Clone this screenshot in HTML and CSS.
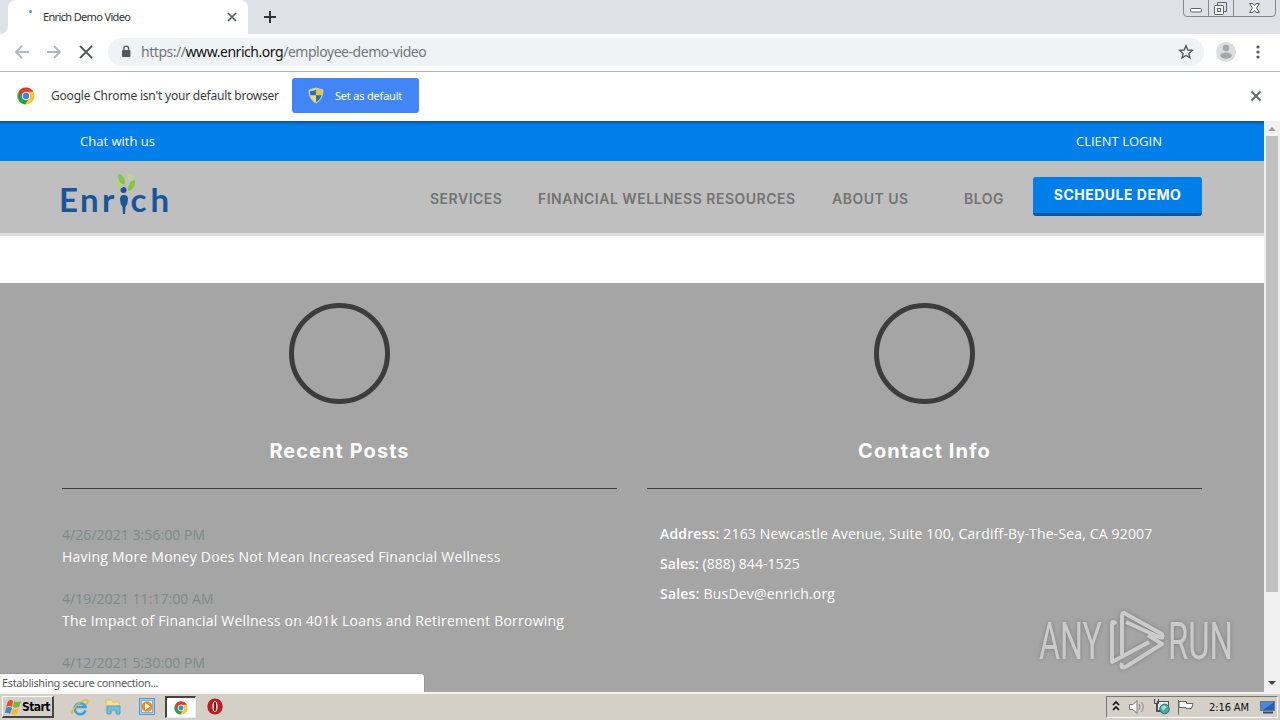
FILE: index.html
```html
<!DOCTYPE html>
<html lang="en">
<head>
<meta charset="utf-8">
<title>Enrich Demo Video</title>
<link rel="stylesheet" href="styles.css">
</head>
<body>
<svg class="defs" width="0" height="0">
  <symbol id="chrome" viewBox="0 0 18 18">
    <circle cx="9" cy="9" r="8.5" fill="#fbc72e"/>
    <path d="M1.600 4.800A8.500 8.500 0 0 0 8.200 17.500L12 11 9 9Z" fill="#2aa04e"/>
    <path d="M1.600 4.800A8.500 8.500 0 0 1 16.400 4.800H9L5.400 10.800Z" fill="#df3c30"/>
    <circle cx="9" cy="9" r="4.100" fill="#fff"/><circle cx="9" cy="9" r="3.200" fill="#4285e8"/>
  </symbol>
</svg>
<div class="screen">
  <header class="tabstrip">
    <div class="edge"></div>
    <div class="tab">
      <i class="spinner"></i><span class="tab-title">Enrich Demo Video</span>
      <svg class="tab-close" width="10" height="10" viewBox="0 0 10 10"><path d="M1 1 9 9M9 1 1 9" stroke="#55595d" stroke-width="1.6"/></svg>
    </div>
    <svg class="new-tab" width="12" height="12" viewBox="0 0 12 12"><path d="M6 0V12M0 6H12" stroke="#303338" stroke-width="2"/></svg>
    <svg class="window-buttons" width="94" height="18" viewBox="0 0 94 18" fill="none" stroke="#5c616a">
      <path d="M.5 0V13Q.5 16.5 4 16.5H89Q92.5 16.5 92.5 13V0M25.500 0V16M50.500 0V16" stroke="#858991"/>
      <rect x="7.500" y="8.500" width="11" height="3.500" rx="1" fill="#fff"/>
      <path d="M34.500 5V2.500H43.500V11.500H41"/><rect x="31.500" y="5.500" width="9" height="9" rx="1" fill="#f5f6f8"/><rect x="34.500" y="8.500" width="3" height="3"/>
      <path d="M66.500 3.500H70L71.500 5.500 73 3.500H76.500L73.500 8 76.500 12.500H73L71.500 10.500 70 12.500H66.500L69.500 8Z" fill="#fff"/>
    </svg>
  </header>

  <div class="toolbar">
    <svg class="nav-icons" width="80" height="16" viewBox="0 0 80 16" fill="none" stroke-width="1.800">
      <path d="M15 8H2M8 2 2 8 8 14M33 8H46M40 2 46 8 40 14" stroke="#b4b6b8"/><path d="M66 2 78 14M78 2 66 14" stroke="#55585c"/>
    </svg>
    <div class="omnibox">
      <svg width="10" height="13" viewBox="0 0 10 13"><rect x="1" y="5" width="8.500" height="7" rx="1" fill="#55595e"/><path d="M2.800 5V3.500a2.400 2.400 0 0 1 4.800 0V5" fill="none" stroke="#55595e" stroke-width="1.400"/></svg>
      <div class="url"><span>https://</span><b>www.enrich.org</b><span>/employee-demo-video</span></div>
      <svg class="star" width="16" height="16" viewBox="0 0 16 16"><path d="M8 1.800 9.800 6 14.300 6.400 10.900 9.400 11.900 13.800 8 11.500 4.100 13.800 5.100 9.400 1.700 6.400 6.200 6Z" fill="none" stroke="#55595e" stroke-width="1.400"/></svg>
    </div>
    <svg class="avatar" width="20" height="20" viewBox="0 0 20 20"><circle cx="10" cy="10" r="10" fill="#dcdddd"/><circle cx="10" cy="6" r="3.200" fill="#a6a7a8"/><ellipse cx="10" cy="13.600" rx="5.800" ry="3.100" fill="#a6a7a8"/></svg>
    <svg width="4" height="14" viewBox="0 0 4 14" fill="#55585c"><circle cx="2" cy="2" r="1.600"/><circle cx="2" cy="7" r="1.600"/><circle cx="2" cy="12" r="1.600"/></svg>
  </div>

  <div class="infobar">
    <svg width="18" height="18"><use href="#chrome"/></svg>
    <span class="info-text">Google Chrome isn't your default browser</span>
    <div class="default-button">
      <svg width="14" height="15" viewBox="0 0 14 15"><path d="M7 0 14 2C14 8 12 12 7 15Z" fill="#e8c83a"/><path d="M7 0 0 2C0 8 2 12 7 15Z" fill="#f2dd62"/><path d="M7 1.500V7.200H1.300L1 3Q5 3 7 1.500Z" fill="#2c6ec4"/><path d="M7 7.200H12.500Q11.500 11.500 7 14Z" fill="#286abb"/><path d="M7 0 14 2C14 8 12 12 7 15 2 12 0 8 0 2Z" fill="none" stroke="#c3cad0"/></svg>
      <span>Set as default</span>
    </div>
    <svg class="info-close" width="10" height="10" viewBox="0 0 10 10"><path d="M.5.5 9.500 9.500M9.500.5.5 9.500" stroke="#66696c" stroke-width="2"/></svg>
  </div>

  <div class="viewport">
    <main class="page">
      <div class="topbar"><span class="chat">Chat with us</span><span class="login">CLIENT LOGIN</span></div>
      <nav class="site-nav">
        <svg class="logo" width="116" height="56" viewBox="-4 0 116 56">
          <g class="logo-text"><text x="-3 18 40" y="40">Enr</text><text x="68.500 88.500" y="40">ch</text></g>
          <circle cx="61.500" cy="18" r="3" fill="#2449a0"/><path d="M58 27Q58 23 62 23T66 27Q66 32 63.500 35L63 42H61L60.500 35Q58 32 58 27Z" fill="#17569b"/>
          <path d="M56 2Q63 1 63 13 56 12 56 2Z" fill="#86c83d"/><path d="M73 8Q66 9 66 19 74 17 73 8Z" fill="#83c536"/><path d="M65 2Q72 1 71 6L66 11Z" fill="#bdce9c"/><path d="M54 8Q52 15 58 17L61 15Z" fill="#b5cf8b"/>
        </svg>
        <span>SERVICES</span><span class="resources">FINANCIAL WELLNESS RESOURCES</span><span>ABOUT US</span><span>BLOG</span>
        <span class="demo">SCHEDULE DEMO</span>
      </nav>
      <div class="spacer"></div>
      <div class="columns">
        <section>
          <div class="ring"></div><h2>Recent Posts</h2>
          <div class="posts">
            <article><time>4/26/2021 3:56:00 PM</time><p>Having More Money Does Not Mean Increased Financial Wellness</p></article>
            <article><time>4/19/2021 11:17:00 AM</time><p>The Impact of Financial Wellness on 401k Loans and Retirement Borrowing</p></article>
            <article><time>4/12/2021 5:30:00 PM</time></article>
          </div>
        </section>
        <section>
          <div class="ring"></div><h2>Contact Info</h2>
          <div class="details">
            <p class="address"><b>Address:</b> 2163 Newcastle Avenue, Suite 100, Cardiff-By-The-Sea, CA 92007</p>
            <p class="phone"><b>Sales:</b> (888) 844-1525</p><p class="email"><b>Sales:</b> BusDev@enrich.org</p>
          </div>
        </section>
      </div>
    </main>
    <div class="scrollbar">
      <svg width="16" height="15"><path d="M4 10 8 6 12 10Z" fill="#999"/></svg>
      <div class="thumb"></div>
      <svg width="16" height="17"><path d="M4 6H12L8 10Z" fill="#444"/></svg>
    </div>
    <div class="status">Establishing secure connection...</div>
    <svg class="watermark" width="208" height="70" viewBox="0 0 208 70">
      <text x="3" y="51" textLength="63" lengthAdjust="spacingAndGlyphs">ANY</text><text x="132" y="51" textLength="65" lengthAdjust="spacingAndGlyphs">RUN</text>
      <g fill="none" stroke="#d2d2d2" stroke-width="4" stroke-linejoin="round">
        <path d="M80 16Q76 11 76 17V54L113 34"/><path d="M86 47V8Q86 3 90 6L126 26Q128 31 123 29L90 14"/><path d="M112 27 126 36 91 58Q84 62 86 55"/>
      </g>
    </svg>
  </div>

  <footer class="taskbar">
    <div class="start">
      <svg width="17" height="16" viewBox="0 0 17 16"><path d="M3 2Q6 0 8 2L7 8Q4 6 1 8Z" fill="#df5426"/><path d="M9 2Q12 4 16 2L14 8Q11 9 8 8Z" fill="#73b442"/><path d="M1 9Q4 7 7 9L5 15Q3 13 0 14Z" fill="#3f84ca"/><path d="M8 9Q11 11 14 9L12 15Q9 16 6 15Z" fill="#f3bb2d"/></svg><span>Start</span>
    </div>
    <svg class="ie" width="18" height="18" viewBox="0 0 18 18"><path d="M14.500 12.500A5.500 5.500 0 1 1 14.500 9H5" fill="none" stroke="#3ba2df" stroke-width="2.600"/><path d="M2 16Q-1 15 5 8 12 1 16 2 18 3 15 7" fill="none" stroke="#e4b928" stroke-width="1.500"/></svg>
    <svg class="folder" width="18" height="18" viewBox="0 0 18 18"><path d="M2 4V2H7L9 4H15V13H2Z" fill="#f4e28e" stroke="#d9c168"/><path d="M3 8H16V16H12V12H7V16H3Z" fill="#75bde3" stroke="#4a9dcc"/></svg>
    <svg class="player" width="16" height="17" viewBox="0 0 16 17"><rect x=".5" y=".5" width="15" height="16" fill="#a5cfef" stroke="#5795ca"/><rect x="2.500" y="2.500" width="11" height="12" fill="#e9f3fb" stroke="#7bafd8"/><circle cx="8" cy="8.500" r="5.300" fill="#f18a18"/><path d="M6 5 11.500 8.500 6 12Z" fill="#fff"/></svg>
    <div class="active-app"><svg width="14" height="14"><use href="#chrome"/></svg></div>
    <svg class="opera" width="16" height="17" viewBox="0 0 16 17"><ellipse cx="8" cy="8.500" rx="7.700" ry="8" fill="#bd1c20"/><ellipse cx="8" cy="8.500" rx="2.600" ry="5.500" fill="#fff"/><ellipse cx="8" cy="8.500" rx="1.200" ry="5" fill="#8e1013"/></svg>
    <div class="tray">
      <svg class="tray-icons" width="96" height="20" viewBox="0 0 96 20" fill="none">
        <path d="M6 8 9 5 12 8M6 13 9 10 12 13" stroke="#111" stroke-width="1.700"/>
        <path d="M22.500 7.500H26L30 3.500V16.500L26 12.500H22.500Z" fill="#fff" stroke="#777"/><path d="M32 7Q34 10 32 13M34.500 5Q38 10 34.500 15" stroke="#888"/>
        <rect x="50.500" y="4.500" width="11" height="9" fill="#dce9ee" stroke="#555"/><path d="M47.500 2V6.500H51.500V2M49.500 7V14.500H56" stroke="#444"/><circle cx="57.500" cy="12" r="4.800" fill="#41a99e" stroke="#376e87"/><path d="M54 10Q57 7 60 10L56 14Z" fill="#a1dfc6"/>
        <path d="M71.500 3V17.500M72 4.500H79.500V6.500H86L84.500 11.500H79V10.500H72Z" fill="#fff" stroke="#666"/>
      </svg>
      <span class="clock">2:16 AM</span>
      <svg class="display" width="16" height="14" viewBox="0 0 16 14"><rect x=".5" y="1.500" width="14" height="9" fill="#235eb7" stroke="#64758a"/><path d="M1 2H14L3 10H1Z" fill="#4a89da"/><path d="M3 12.500H13" stroke="#2d4b79" stroke-width="2"/></svg>
    </div>
  </footer>
</div>
</body>
</html>
```
FILE: styles.css
```css
* { box-sizing: border-box; }
body, p, h2 { margin: 0; }
body { overflow: hidden; font-family: "DejaVu Sans Condensed", "DejaVu Sans", sans-serif; }
svg { display: block; flex: none; overflow: visible; }
.defs { position: absolute; }
span, p, time, h2, .url, .status { white-space: nowrap; }
.screen { width: 1280px; height: 720px; display: flex; flex-direction: column; }

.tabstrip { height: 34px; flex: none; display: flex; background: #dee1e7; }
.edge { width: 8px; background: #fff; }
.edge::before { content: ""; display: block; height: 34px; background: #dee1e7; border-bottom-right-radius: 8px; }
.tab { width: 240px; height: 34px; padding-bottom: 1px; display: flex; align-items: center; background: #fff; border-radius: 8px 8px 0 0; }
.spinner { width: 3px; height: 3px; margin: -10px 11px 0 21px; background: #5c93c2; border-radius: 50%; }
.tab-title { width: 184px; font-family: "Noto Sans", sans-serif; font-size: 11px; letter-spacing: -.65px; color: #303236; }
.new-tab { margin: 11px 0 0 16px; }
.window-buttons { margin-left: auto; margin-right: 3px; }

.toolbar { height: 38px; flex: none; display: flex; align-items: center; padding-bottom: 2px; border-bottom: 1px solid #b1b3b5; background: #fff; }
.nav-icons { margin-left: 14px; }
.omnibox { width: 1096px; height: 28px; margin-left: 14px; padding-left: 13px; display: flex; align-items: center; border-radius: 14px; background: #f0f3f5; }
.url { margin-left: 10px; font-family: "Noto Sans", sans-serif; font-size: 14px; letter-spacing: -.46px; color: #73777b; }
.url b { font-weight: 400; color: #111; }
.star { margin-left: auto; margin-right: 10px; }
.avatar { margin: 0 20px 0 12px; }

.infobar { height: 49px; flex: none; display: flex; align-items: center; padding: 0 0 2px 17px; background: #fff; }
.info-text { width: 241px; margin-left: 16px; font-family: "Noto Sans", sans-serif; font-size: 12px; letter-spacing: -.2px; color: #393b3d; }
.default-button { width: 127px; height: 35px; padding-left: 17px; display: flex; align-items: center; gap: 12px; border-radius: 3px; background: #4285f4; color: #fff; font-family: "Noto Sans", sans-serif; font-size: 11px; letter-spacing: -.2px; }
.info-close { margin-left: auto; margin-right: 19px; }

.viewport { position: relative; height: 571px; flex: none; display: flex; overflow: hidden; }
.page { width: 1264px; background: #a5a5a5; font-family: "Open Sans", sans-serif; }
.topbar { height: 40px; display: grid; grid-template-columns: 996px auto; align-items: center; padding-left: 80px; background: linear-gradient(#064f9a 0, #0577dc 3px, #007eea 5px); color: #fff; font-size: 13px; }
.site-nav { height: 75px; display: grid; grid-template-columns: 368px 108px 294px 132px 69px 169px; padding-left: 62px; border-bottom: 3px solid #dcdcdc; background: #bfbfbf; color: #737373; font-family: Inter, sans-serif; font-size: 14px; font-weight: 600; letter-spacing: .5px; line-height: 76px; }
.logo { margin: 11px 0 0 -4px; }
.logo-text { font-family: Lato, sans-serif; font-size: 33px; font-weight: 700; letter-spacing: 0; fill: #17569b; }
.demo { height: 39px; margin-top: 16px; line-height: 36px; text-align: center; color: #fff; background: #007eea; border-bottom: 3px solid #07559b; border-radius: 3px; font-weight: 700; }
.spacer { height: 47px; background: #fff; }
.columns { display: grid; grid-template-columns: 555px 555px; gap: 30px; padding: 20px 0 0 62px; color: #fff; }
.ring { width: 101px; height: 101px; margin: 0 auto; border: 5px solid #3c3c3c; border-radius: 50%; }
h2 { height: 85px; padding-top: 34px; border-bottom: 1px solid #3c3c3c; font-family: Inter, sans-serif; font-size: 20px; line-height: 26px; font-weight: 700; letter-spacing: 1.05px; text-align: center; }
.posts { padding-top: 35px; font-size: 14px; line-height: 22px; letter-spacing: .22px; }
article { height: 64px; }
time { display: block; color: #828888; letter-spacing: .06px; }
.details { padding: 30px 0 0 13px; font-size: 14px; line-height: 30px; }
.details b { font-weight: 600; }
.address { letter-spacing: .16px; }
.phone { letter-spacing: .06px; }
.email { letter-spacing: .2px; }
.scrollbar { width: 16px; background: #f1f1f1; }
.thumb { width: 12px; height: 456px; margin-left: 2px; background: #c1c1c1; }
.scrollbar svg:last-child { margin-top: 83px; }
.status { position: absolute; left: 0; bottom: 0; width: 425px; height: 19px; padding-left: 2px; line-height: 17px; font-family: "Noto Sans", sans-serif; font-size: 11px; letter-spacing: -.37px; color: #5c5c5c; background: #fff; border: solid #999; border-width: 1px 1px 0 0; border-radius: 0 4px 0 0; }
.watermark { position: absolute; left: 1036px; top: 487px; filter: drop-shadow(0 0 2px #777); opacity: .85; }
.watermark text { fill: #d2d2d2; font-family: Roboto, sans-serif; font-size: 52px; font-weight: 400; }

.taskbar { height: 28px; flex: none; display: flex; align-items: flex-start; padding: 4px 2px 0; background: #d4d0c8; box-shadow: inset 0 2px #f5f4f1; }
.start { width: 52px; height: 22px; display: flex; align-items: center; padding-left: 2px; border: solid; border-color: #fff #444 #444 #fff; border-width: 1px 2px 2px 1px; font-size: 12px; font-weight: 700; color: #000; }
.start span { letter-spacing: -.6px; }
.ie { margin: 2px 0 0 17px; }
.folder { margin: 2px 0 0 15px; }
.player { margin: 2px 0 0 17px; }
.active-app { width: 31px; height: 22px; display: grid; place-items: center; margin-left: 10px; background: #fff; border: solid; border-width: 2px 1px 1px 2px; border-color: #444 #eee #eee #444; }
.opera { margin: 2px 0 0 11px; }
.tray { width: 172px; height: 22px; margin-left: auto; display: flex; align-items: center; border: 1px solid; border-color: #777 #fff #fff #777; }
.clock { width: 51px; margin-left: 6px; font-family: "DejaVu Sans Condensed", sans-serif; font-size: 11px; letter-spacing: -.1px; color: #111; }
```
